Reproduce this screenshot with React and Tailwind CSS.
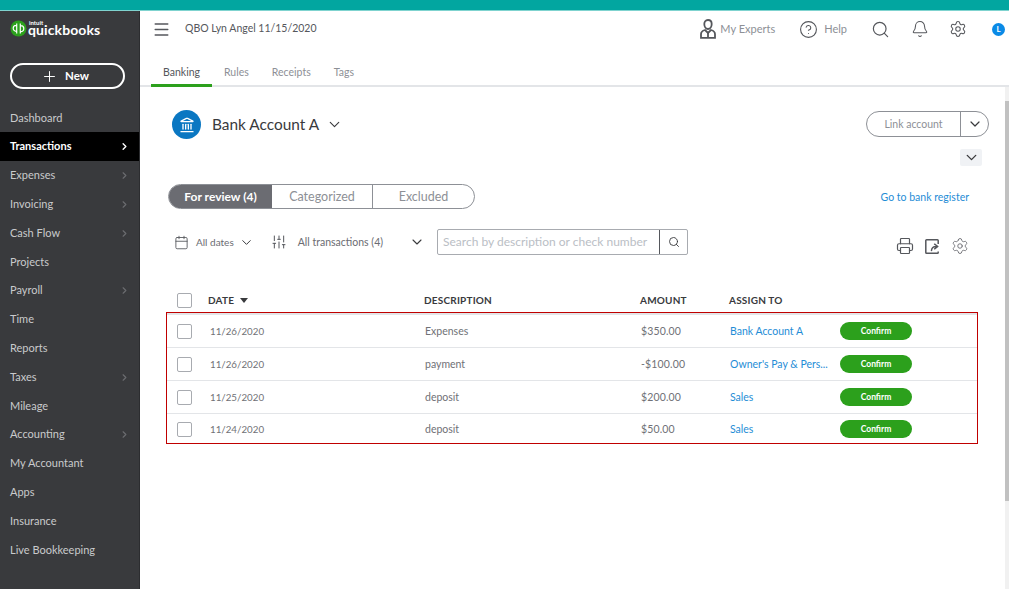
import React from "react";
import { ChevronRight, ChevronDown, Search, Bell, Settings, CircleHelp, Printer, Calendar, Plus, Menu, SlidersVertical, Landmark } from "lucide-react";

const nav = [
  ["Dashboard", 0], ["Transactions", 2], ["Expenses", 1], ["Invoicing", 1], ["Cash Flow", 1], ["Projects", 0],
  ["Payroll", 1], ["Time", 0], ["Reports", 0], ["Taxes", 1], ["Mileage", 0], ["Accounting", 1],
  ["My Accountant", 0], ["Apps", 0], ["Insurance", 0], ["Live Bookkeeping", 0],
];
const rows = [
  ["11/26/2020", "Expenses", "$350.00", "Bank Account A"],
  ["11/26/2020", "payment", "-$100.00", "Owner's Pay & Pers..."],
  ["11/25/2020", "deposit", "$200.00", "Sales"],
  ["11/24/2020", "deposit", "$50.00", "Sales"],
];

function Box() {
  return <span className="block w-[15px] h-[15px] border border-[#a8abb0] rounded-[2px] bg-white" />;
}

function Expert() {
  return (
    <svg width="16" height="20" viewBox="0 0 16 20" fill="none" stroke="#55575c" strokeWidth="1.8">
      <path d="M8 1c2.6 0 3.7 1.9 3.7 4 0 2.6-1.5 5-3.7 5S4.3 7.6 4.3 5c0-2.1 1.1-4 3.7-4z" />
      <path d="M1 18.8v-3.5c0-2.4 2-3.8 4-4.3L8 14l3-3c2 .5 4 1.9 4 4.3v3.5z" />
      <path d="M8 14v4.8" />
    </svg>
  );
}

function ExportDoc() {
  return (
    <svg width="15" height="15" viewBox="0 0 15 15" fill="none" stroke="#55575c" strokeWidth="1.5" strokeLinejoin="round">
      <path d="M13.2 5V1.6a.8.8 0 0 0-.8-.8H1.6a.8.8 0 0 0-.8.8v11.8a.8.8 0 0 0 .8.8h10.8a.8.8 0 0 0 .8-.8v-1" />
      <path d="M6.5 11.5c.2-2.6 1.8-4 4.6-4M9.6 5.2l3.2 2.3-3.2 2.3" strokeLinecap="round" />
    </svg>
  );
}

export default function App() {
  return (
    <div className="w-[1009px] h-[589px] overflow-hidden flex flex-col bg-white font-['Lato','Noto_Sans',sans-serif] text-[#6b6c72]">
      <div className="h-[11px] shrink-0 bg-[#02a6a0] border-b border-[#7fd3cf]" />
      <div className="flex flex-1 min-h-0">
        <aside className="w-[140px] shrink-0 bg-[#393a3d] border-r border-[#2c2d30]">
          <div className="h-[36px] pl-[10px] flex items-center gap-[1px]">
            <svg width="17" height="17" viewBox="0 0 17 17" className="shrink-0 -mt-[2px]">
              <circle cx="8.5" cy="8.5" r="8" fill="#2ca01c" />
              <path d="M6.2 5.3a3 3 0 1 0 0 6h.5M6.7 3.5v10M10.8 11.7a3 3 0 1 0 0-6h-.5M10.3 13.5v-10" fill="none" stroke="#fff" strokeWidth="1.2" />
            </svg>
            <div className="flex flex-col text-white leading-none -mt-[7px]">
              <span className="text-[6px] font-bold h-[5px] leading-[5px] mt-[3px] ml-[1px]">intuit</span>
              <span className="text-[14px] font-bold leading-[9px] tracking-[0.1px]">quickbooks</span>
            </div>
          </div>
          <div className="pl-[10px] pt-[16px]">
            <div className="w-[115px] h-[26px] rounded-full border-2 border-white flex items-center justify-center gap-[7px] text-white text-[11.5px] font-bold pr-[5px]">
              <Plus size={17} strokeWidth={1.4} />
              <span>New</span>
            </div>
          </div>
          <nav className="pt-[14.5px]">
            {nav.map(([t, k]) => (
              <div key={t} className={`h-[28.8px] pl-[10px] pr-[9px] flex items-center justify-between text-[11px] ${k === 2 ? "bg-black text-white font-bold" : "text-[#c9cacc]"}`}>
                <span>{t}</span>
                {k === 2 && <ChevronRight size={11} strokeWidth={3} />}
                {k === 1 && <ChevronRight size={11} strokeWidth={2.5} className="text-[#6b6c70]" />}
              </div>
            ))}
          </nav>
        </aside>

        <main className="flex-1 min-w-0 flex flex-col">
          <header className="h-[36px] shrink-0 flex items-center pl-[12px] pr-[4px]">
            <Menu size={19} strokeWidth={1.7} className="text-[#55575c]" />
            <span className="ml-[14px] text-[10.5px] text-[#55575c]">QBO Lyn Angel 11/15/2020</span>
            <div className="ml-auto flex items-center">
              <Expert />
              <span className="ml-[4px] text-[11px] text-[#8d9096]">My Experts</span>
              <CircleHelp size={19} strokeWidth={1.4} className="ml-[24px] text-[#55575c]" />
              <span className="ml-[6px] text-[11px] text-[#8d9096]">Help</span>
              <Search size={19} strokeWidth={1.5} className="ml-[24px] text-[#55575c]" />
              <Bell size={18} strokeWidth={1.4} className="ml-[21px] text-[#55575c]" />
              <Settings size={18} strokeWidth={1.4} className="ml-[20px] text-[#55575c]" />
              <span className="ml-[25px] w-[13px] h-[13px] rounded-full bg-[#0a8ae6] text-white text-[8px] font-bold flex items-center justify-center">L</span>
            </div>
          </header>

          <div className="h-[40px] shrink-0 pl-[11px] flex items-end border-b-[2px] border-[#e3e5e8]">
            <div className="w-[61px] h-[24px] -mb-[2px] border-b-[3px] border-[#2ca01c] text-[10.5px] text-[#55575c] flex items-start justify-center pt-[2px]">Banking</div>
            <div className="h-[24px] ml-[12px] text-[10.5px] text-[#8d9096] pt-[2px] -mb-[2px]">Rules</div>
            <div className="h-[24px] ml-[23px] text-[10.5px] text-[#8d9096] pt-[2px] -mb-[2px]">Receipts</div>
            <div className="h-[24px] ml-[23px] text-[10.5px] text-[#8d9096] pt-[2px] -mb-[2px]">Tags</div>
          </div>

          <div className="flex flex-1 min-h-0">
            <div className="flex-1 min-w-0 pl-[27px] pr-[36px]">
              <div className="pl-[5px] pt-[23px] flex items-start justify-between -mr-[20px]">
                <div className="flex items-center h-[29px]">
                  <span className="w-[29px] h-[29px] rounded-full bg-[#0a77c2] flex items-center justify-center text-white">
                    <Landmark size={16} strokeWidth={2} />
                  </span>
                  <span className="ml-[11px] text-[15.4px] text-[#393a3d]">Bank Account A</span>
                  <ChevronDown size={17} strokeWidth={1.6} className="ml-[7px] text-[#393a3d]" />
                </div>
                <div className="mt-[1px] w-[123px] h-[26px] border border-[#8d9096] rounded-full flex items-center">
                  <span className="flex-1 text-center text-[10.5px] text-[#8d9096] pt-[1px]">Link account</span>
                  <span className="w-[28px] h-full border-l border-[#8d9096] flex items-center justify-center text-[#393a3d]">
                    <ChevronDown size={16} strokeWidth={1.8} />
                  </span>
                </div>
              </div>
              <div className="flex justify-end -mr-[13px] mt-[10px]">
                <span className="w-[22px] h-[17px] bg-[#f0f2f5] rounded-[2px] flex items-center justify-center text-[#393a3d]">
                  <ChevronDown size={17} strokeWidth={1.9} />
                </span>
              </div>
              <div className="flex items-center justify-between mt-[18px] pl-[1px]">
                <div className="w-[307px] h-[25px] flex border border-[#8d9096] rounded-full overflow-hidden">
                  <span className="w-[103px] bg-[#6b6c72] text-white font-bold text-[12px] flex items-center justify-center">For review (4)</span>
                  <span className="w-[101px] border-r border-[#8d9096] text-[#8d9096] text-[12.5px] pt-[1px] flex items-center justify-center">Categorized</span>
                  <span className="flex-1 text-[#8d9096] text-[12.5px] pt-[1px] flex items-center justify-center">Excluded</span>
                </div>
                <span className="text-[10.5px] text-[#1f8dd6] mt-[3px]">Go to bank register</span>
              </div>
              <div className="flex items-center mt-[20px] pl-[7px] h-[26px] text-[#6b6c72]">
                <Calendar size={15} strokeWidth={1.4} className="text-[#55575c]" />
                <span className="ml-[7px] text-[10px]">All dates</span>
                <ChevronDown size={15} strokeWidth={1.6} className="ml-[5px] text-[#393a3d]" />
                <SlidersVertical size={16} strokeWidth={1.5} className="ml-[17px] text-[#55575c]" />
                <span className="ml-[11px] text-[10.5px] pt-[1px]">All transactions (4)</span>
                <ChevronDown size={16} strokeWidth={1.6} className="ml-[26px] text-[#393a3d]" />
                <div className="ml-[12px] w-[251px] h-[26px] border border-[#a8abb0] rounded-[2px] flex items-center shrink-0">
                  <span className="flex-1 pl-[5px] text-[12px] text-[#babec5] whitespace-nowrap overflow-hidden">Search by description or check number</span>
                  <span className="w-[28px] h-full border-l border-[#55575c] flex items-center justify-center text-[#393a3d]">
                    <Search size={12} strokeWidth={1.8} />
                  </span>
                </div>
                <div className="ml-auto flex items-center gap-[11px] mt-[8px]">
                  <Printer size={18} strokeWidth={1.6} className="text-[#55575c]" />
                  <ExportDoc />
                  <Settings size={18} strokeWidth={1.2} className="text-[#6b6c72]" />
                </div>
              </div>

              <div className="mt-[33px] h-[24px] flex items-center text-[10px] font-bold text-[#393a3d] pl-[10px] tracking-[0.2px]">
                <span className="w-[31px]"><Box /></span>
                <span className="w-[216px] flex items-center gap-[6px]">
                  DATE
                  <svg width="8" height="5" viewBox="0 0 8 5"><path d="M0 0h8L4 5z" fill="#393a3d" /></svg>
                </span>
                <span className="w-[216px]">DESCRIPTION</span>
                <span className="w-[89px]">AMOUNT</span>
                <span>ASSIGN TO</span>
              </div>
              <div className="-ml-[1px] -mr-[9px] h-[132px] border border-[#c00000] flex flex-col">
                <div className="h-[2px] bg-[#e3e5e8] shrink-0" />
                {rows.map((r, i) => (
                  <div key={i} className={`flex items-center pl-[10px] text-[10.5px] text-[#707176] ${i < 3 ? "h-[33px] border-b border-[#e3e5e8]" : "h-[29px] pt-[1px]"}`}>
                    <span className="w-[33px]"><Box /></span>
                    <span className="w-[215px] text-[9.75px]">{r[0]}</span>
                    <span className="w-[216px] pt-[1px]">{r[1]}</span>
                    <span className="w-[89px] tracking-[0.15px] pt-[1px]">{r[2]}</span>
                    <span className="w-[110px] text-[#1f8dd6] whitespace-nowrap pt-[1px]">{r[3]}</span>
                    <span className="w-[72px] h-[18px] rounded-full bg-[#2ca01c] text-white text-[8.5px] font-bold flex items-center justify-center">Confirm</span>
                  </div>
                ))}
              </div>
            </div>
            <div className="w-[4px] shrink-0 bg-[#f1f1f1] flex flex-col">
              <div className="h-[14px]" />
              <div className="h-[400px] bg-[#c1c1c1]" />
            </div>
          </div>
        </main>
      </div>
    </div>
  );
}
